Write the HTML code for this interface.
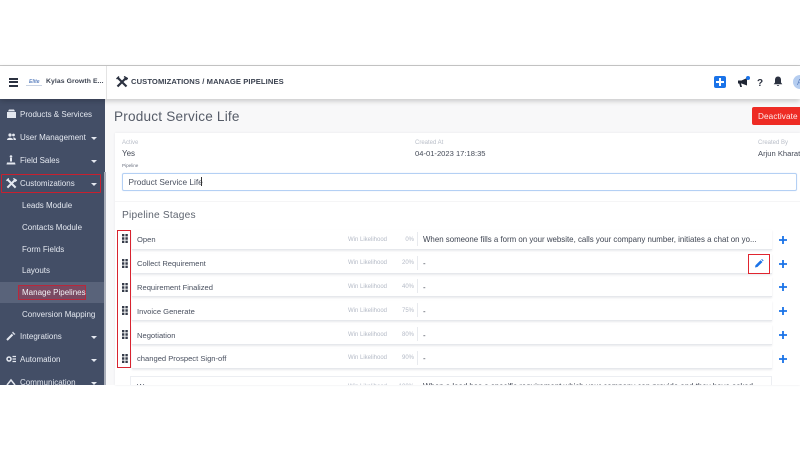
<!DOCTYPE html>
<html><head><meta charset="utf-8"><style>
html,body{margin:0;padding:0;background:#fff;}
#p{position:relative;width:800px;height:450px;overflow:hidden;background:#fff;font-family:"Liberation Sans",sans-serif;color:#3b4250;filter:blur(.3px);}
#p div,#p svg,#p span.a{position:absolute;}
.t{white-space:nowrap;line-height:12px;}
.m{color:#e4e8f0;font-size:8px;left:20px;margin-top:1px;}
.s{color:#e4e8f0;font-size:8px;left:22px;margin-top:1px;}
.r{left:132px;width:640px;height:19px;background:#fff;border-bottom:1px solid #e6e8ec;box-shadow:0 1px 2px #e8e9ec;}
.n{left:137px;font-size:7.6px;color:#4a5160;}
.w{left:348px;font-size:6px;color:#b4bac6;}
.q{left:390px;width:24px;text-align:right;font-size:6px;color:#b4bac6;}
.d{left:423px;font-size:7.88px;color:#3f4552;}
.v{left:416.5px;width:1px;height:14px;background:#e8eaee;}
.g{left:122px;}
.c{left:91px;width:0;height:0;border-left:3px solid transparent;border-right:3px solid transparent;border-top:3px solid #e4e8f0;}
.pl{left:779px;}
</style></head><body><div id="p">
<div style="left:0;top:65px;width:800px;height:1px;background:#c9c9c9"></div>
<div style="left:0;top:66px;width:800px;height:33px;background:#fff;box-shadow:0 2px 5px rgba(0,0,0,.2);z-index:3"></div>
<div style="left:0;top:99px;width:800px;height:286px;background:#f8f8f9"></div>
<div style="left:0;top:99px;width:105px;height:286px;background:#434e66"></div>
<div style="left:104px;top:172px;width:2px;height:213px;background:#a9aeb9"></div>

<div style="z-index:4;left:0;top:66px;width:800px;height:33px">
<div style="left:9px;top:11.5px;width:9px;height:2px;background:#2b3140"></div>
<div style="left:9px;top:15px;width:9px;height:2px;background:#2b3140"></div>
<div style="left:9px;top:18.5px;width:9px;height:2px;background:#2b3140"></div>
<div class="t" style="left:29px;top:10px;font-size:5px;color:#5f83c0;font-style:italic;font-weight:bold">Elite</div>
<div style="left:26px;top:19px;width:16px;height:1px;background:#c9d3e3"></div>
<div class="t" style="left:46px;top:10px;font-size:6.8px;font-weight:bold;color:#3b4250;letter-spacing:.1px">Kylas Growth E...</div>
<div style="left:106px;top:0;width:1px;height:33px;background:#e4e4e4"></div>
<svg style="left:116px;top:10px" width="12" height="12" viewBox="0 0 12 12"><path d="M1.5 1.5L10.5 10.5M10.5 1.5L1.5 10.5" stroke="#2b3140" stroke-width="2.2"/><path d="M.5 3L3 .5M8 .5L11.5 2.5 9.5 4" stroke="#2b3140" stroke-width="1.4" fill="none"/></svg>
<div class="t" style="left:131px;top:10px;font-size:7.6px;font-weight:bold;color:#3b4250;letter-spacing:.1px">CUSTOMIZATIONS / MANAGE PIPELINES</div>
<div style="left:714px;top:10px;width:12px;height:12px;background:#1a73e8;border-radius:2px"></div>
<div style="left:719px;top:12px;width:2px;height:8px;background:#fff"></div>
<div style="left:716px;top:15px;width:8px;height:2px;background:#fff"></div>
<svg style="left:737px;top:10px" width="12" height="12" viewBox="0 0 10 12"><path d="M0 4.5H3.5L9 2V9.5L3.5 7.5H3L4 11H2.2L1.2 7.5H0Z" fill="#1f2533"/></svg>
<div style="left:746px;top:10px;width:4px;height:4px;border-radius:50%;background:#1a73e8"></div>
<div class="t" style="left:757px;top:12px;font-size:10px;font-weight:bold;color:#2b3140">?</div>
<svg style="left:773px;top:10px" width="10" height="11" viewBox="0 0 10 11"><path d="M5 .5C7 .5 8 2 8 4V6.5L9.3 8.3H.7L2 6.5V4C2 2 3 .5 5 .5ZM3.8 9H6.2C6.2 10.2 3.8 10.2 3.8 9Z" fill="#2b3140"/></svg>
<div style="left:793px;top:9px;width:14px;height:14px;border-radius:50%;background:#b5cdf0"></div>
<div class="t" style="left:797px;top:11px;font-size:8px;color:#5f83c0">A</div>
</div>

<!-- Sidebar -->
<svg style="left:7px;top:109px" width="9" height="10" viewBox="0 0 9 10"><path d="M0 3H9V9H0ZM1 2.4L2 .5H7L8 2.4Z" fill="#e4e8f0"/></svg>
<div class="t m" style="top:108px">Products &amp; Services</div>
<svg style="left:7px;top:133px" width="9" height="8" viewBox="0 0 9 8"><circle cx="3" cy="2" r="1.6" fill="#e4e8f0"/><circle cx="6.5" cy="2" r="1.4" fill="#e4e8f0"/><path d="M0 7C0 4 6 4 6 7ZM6.5 7C6.5 5.5 6.3 5 6 4.5 8 4.3 9 5.5 9 7Z" fill="#e4e8f0"/></svg>
<div class="t m" style="top:131px">User Management</div><div class="c" style="top:137px"></div>
<svg style="left:6px;top:155px" width="10" height="10" viewBox="0 0 10 10"><circle cx="5" cy="1.5" r="1.3" fill="#e4e8f0"/><path d="M4 3H6V6.5H4ZM1 7.5H9L9.5 9.5H.5Z" fill="#e4e8f0"/></svg>
<div class="t m" style="top:154px">Field Sales</div><div class="c" style="top:160px"></div>
<svg style="left:6px;top:178px" width="11" height="11" viewBox="0 0 12 12"><path d="M1.5 1.5L10.5 10.5M10.5 1.5L1.5 10.5" stroke="#e4e8f0" stroke-width="2.2"/><path d="M.5 3L3 .5M8 .5L11.5 2.5 9.5 4" stroke="#e4e8f0" stroke-width="1.4" fill="none"/></svg>
<div class="t m" style="top:177px">Customizations</div><div class="c" style="top:183px"></div>
<div style="left:1px;top:174px;width:98px;height:17px;border:1px solid #c8202f;border-radius:1px"></div>
<div class="t s" style="top:199px">Leads Module</div>
<div class="t s" style="top:221px">Contacts Module</div>
<div class="t s" style="top:243px">Form Fields</div>
<div class="t s" style="top:264px">Layouts</div>
<div style="left:0;top:282px;width:104px;height:21px;background:#59637a"></div>
<div style="left:18px;top:285px;width:66px;height:13px;border:1px solid #b8283c;background:#7a4a62"></div>
<div class="t s" style="top:286px;color:#f0f2f6">Manage Pipelines</div>
<div class="t s" style="top:308px">Conversion Mapping</div>
<svg style="left:6px;top:331px" width="10" height="10" viewBox="0 0 10 10"><path d="M1 9L6.5 3.5" stroke="#e4e8f0" stroke-width="2"/><path d="M7 .5L8 2 9.5 3 8 4 7 2.5 6 2Z" fill="#e4e8f0"/></svg>
<div class="t m" style="top:330px">Integrations</div><div class="c" style="top:336px"></div>
<svg style="left:6px;top:355px" width="10" height="8" viewBox="0 0 10 8"><circle cx="3" cy="4" r="2" fill="none" stroke="#e4e8f0" stroke-width="1.5"/><path d="M6.5 1.5H10M6.5 4H10M6.5 6.5H10" stroke="#e4e8f0" stroke-width="1.2"/></svg>
<div class="t m" style="top:353px">Automation</div><div class="c" style="top:359px"></div>
<svg style="left:6px;top:378px" width="10" height="7" viewBox="0 0 10 7"><path d="M1 7L5 2 9 7" stroke="#e4e8f0" stroke-width="1.5" fill="none"/></svg>
<div style="left:0;top:376px;width:100px;height:9px;overflow:hidden"><div class="t m" style="top:0px">Communication</div><div class="c" style="top:6px"></div></div>

<!-- Content -->
<div class="t" style="left:114px;top:108px;font-size:13.6px;line-height:18px;color:#565c68;letter-spacing:.2px">Product Service Life</div>
<div style="left:752px;top:107px;width:48px;height:18px;background:#ee2b24;border-radius:2px 0 0 2px"></div>
<div class="t" style="left:758px;top:111px;font-size:8.2px;color:#fdecec;letter-spacing:.1px">Deactivate</div>
<div style="left:115px;top:133px;width:685px;height:252px;background:#fff;box-shadow:0 0 2px #e6e7ea"></div>
<div class="t" style="left:122px;top:137px;font-size:6px;color:#b9bec8">Active</div>
<div class="t" style="left:122px;top:148px;font-size:8px;color:#454b58">Yes</div>
<div class="t" style="left:415px;top:137px;font-size:6px;color:#b9bec8">Created At</div>
<div class="t" style="left:415px;top:148px;font-size:7.6px;color:#454b58">04-01-2023 17:18:35</div>
<div class="t" style="left:758px;top:137px;font-size:6px;color:#b9bec8">Created By</div>
<div class="t" style="left:758px;top:148px;font-size:7.6px;color:#454b58">Arjun Kharat</div>
<div class="t" style="left:122px;top:160px;font-size:4.6px;color:#6b7180">Pipeline</div>
<div style="left:122px;top:173px;width:673px;height:16px;border:1px solid #b4d0f4;border-radius:2px;box-shadow:0 0 1px #cfe0f8"></div>
<div class="t" style="left:128.5px;top:176px;font-size:8.3px;color:#4a5160">Product Service Life</div>
<div style="left:200.5px;top:177px;width:1px;height:9px;background:#333"></div>
<div style="left:115px;top:201px;width:685px;height:1px;background:#f5f5f6"></div>
<div class="t" style="left:122px;top:209px;font-size:10.2px;line-height:14px;color:#5f6570;letter-spacing:.2px">Pipeline Stages</div>

<div class="r" style="top:230px"></div><div class="r" style="top:254px"></div><div class="r" style="top:277px"></div><div class="r" style="top:301px"></div><div class="r" style="top:325px"></div><div class="r" style="top:349px"></div>
<div style="left:130px;top:376px;width:642px;height:9px;background:#fff;border:1px solid #eceef2;border-bottom:0;box-sizing:border-box"></div>

<div class="t n" style="top:234px">Open</div>
<div class="t n" style="top:258px">Collect Requirement</div>
<div class="t n" style="top:282px">Requirement Finalized</div>
<div class="t n" style="top:306px">Invoice Generate</div>
<div class="t n" style="top:330px">Negotiation</div>
<div class="t n" style="top:353px">changed Prospect Sign-off</div>

<div class="t w" style="top:234px">Win Likelihood</div><div class="t q" style="top:234px">0%</div><div class="v" style="top:232px"></div>
<div class="t w" style="top:257px">Win Likelihood</div><div class="t q" style="top:257px">20%</div><div class="v" style="top:256px"></div>
<div class="t w" style="top:281px">Win Likelihood</div><div class="t q" style="top:281px">40%</div><div class="v" style="top:279px"></div>
<div class="t w" style="top:305px">Win Likelihood</div><div class="t q" style="top:305px">75%</div><div class="v" style="top:303px"></div>
<div class="t w" style="top:329px">Win Likelihood</div><div class="t q" style="top:329px">80%</div><div class="v" style="top:327px"></div>
<div class="t w" style="top:352px">Win Likelihood</div><div class="t q" style="top:352px">90%</div><div class="v" style="top:351px"></div>

<div class="t d" style="top:234px">When someone fills a form on your website, calls your company number, initiates a chat on yo...</div>
<div class="t d" style="top:258px">-</div><div class="t d" style="top:282px">-</div><div class="t d" style="top:306px">-</div><div class="t d" style="top:330px">-</div><div class="t d" style="top:353px">-</div>

<div style="left:0;top:376px;width:800px;height:9px;overflow:hidden">
<div class="t n" style="top:5px">Won</div>
<div class="t w" style="top:5px">Win Likelihood</div><div class="t q" style="top:5px">100%</div>
<div class="t d" style="top:5px">When a lead has a specific requirement which your company can provide and they have asked</div>
</div>

<svg class="g" style="top:234px" width="6" height="9" viewBox="0 0 6 9"><path d="M0 0h2.4v2.4H0zM3.4 0h2.4v2.4H3.4zM0 3.3h2.4v2.4H0zM3.4 3.3h2.4v2.4H3.4zM0 6.6h2.4V9H0zM3.4 6.6h2.4V9H3.4z" fill="#363c4a"/></svg>
<svg class="g" style="top:259px" width="6" height="9" viewBox="0 0 6 9"><path d="M0 0h2.4v2.4H0zM3.4 0h2.4v2.4H3.4zM0 3.3h2.4v2.4H0zM3.4 3.3h2.4v2.4H3.4zM0 6.6h2.4V9H0zM3.4 6.6h2.4V9H3.4z" fill="#363c4a"/></svg>
<svg class="g" style="top:283px" width="6" height="9" viewBox="0 0 6 9"><path d="M0 0h2.4v2.4H0zM3.4 0h2.4v2.4H3.4zM0 3.3h2.4v2.4H0zM3.4 3.3h2.4v2.4H3.4zM0 6.6h2.4V9H0zM3.4 6.6h2.4V9H3.4z" fill="#363c4a"/></svg>
<svg class="g" style="top:306px" width="6" height="9" viewBox="0 0 6 9"><path d="M0 0h2.4v2.4H0zM3.4 0h2.4v2.4H3.4zM0 3.3h2.4v2.4H0zM3.4 3.3h2.4v2.4H3.4zM0 6.6h2.4V9H0zM3.4 6.6h2.4V9H3.4z" fill="#363c4a"/></svg>
<svg class="g" style="top:330px" width="6" height="9" viewBox="0 0 6 9"><path d="M0 0h2.4v2.4H0zM3.4 0h2.4v2.4H3.4zM0 3.3h2.4v2.4H0zM3.4 3.3h2.4v2.4H3.4zM0 6.6h2.4V9H0zM3.4 6.6h2.4V9H3.4z" fill="#363c4a"/></svg>
<svg class="g" style="top:354px" width="6" height="9" viewBox="0 0 6 9"><path d="M0 0h2.4v2.4H0zM3.4 0h2.4v2.4H3.4zM0 3.3h2.4v2.4H0zM3.4 3.3h2.4v2.4H3.4zM0 6.6h2.4V9H0zM3.4 6.6h2.4V9H3.4z" fill="#363c4a"/></svg>
<div style="left:117px;top:230px;width:12px;height:136px;border:1.5px solid #d8232f"></div>

<div style="left:748px;top:254px;width:20px;height:18px;border:1.5px solid #e0252f"></div>
<svg style="left:754px;top:259px" width="10" height="9" viewBox="0 0 10 9"><path d="M1 8.5L1.5 6.2 6.5 1.2 8.5 3 3.4 8Z" fill="#1a73e8"/><path d="M7.2.6L8 0 9.6 1.5 9 2.3Z" fill="#1a73e8"/></svg>

<svg class="pl" style="top:236px" width="8" height="8" viewBox="0 0 8 8"><path d="M3.1 0h1.8v3.1H8v1.8H4.9V8H3.1V4.9H0V3.1h3.1z" fill="#1a73e8"/></svg>
<svg class="pl" style="top:260px" width="8" height="8" viewBox="0 0 8 8"><path d="M3.1 0h1.8v3.1H8v1.8H4.9V8H3.1V4.9H0V3.1h3.1z" fill="#1a73e8"/></svg>
<svg class="pl" style="top:283px" width="8" height="8" viewBox="0 0 8 8"><path d="M3.1 0h1.8v3.1H8v1.8H4.9V8H3.1V4.9H0V3.1h3.1z" fill="#1a73e8"/></svg>
<svg class="pl" style="top:307px" width="8" height="8" viewBox="0 0 8 8"><path d="M3.1 0h1.8v3.1H8v1.8H4.9V8H3.1V4.9H0V3.1h3.1z" fill="#1a73e8"/></svg>
<svg class="pl" style="top:331px" width="8" height="8" viewBox="0 0 8 8"><path d="M3.1 0h1.8v3.1H8v1.8H4.9V8H3.1V4.9H0V3.1h3.1z" fill="#1a73e8"/></svg>
<svg class="pl" style="top:355px" width="8" height="8" viewBox="0 0 8 8"><path d="M3.1 0h1.8v3.1H8v1.8H4.9V8H3.1V4.9H0V3.1h3.1z" fill="#1a73e8"/></svg>
</div></body></html>
